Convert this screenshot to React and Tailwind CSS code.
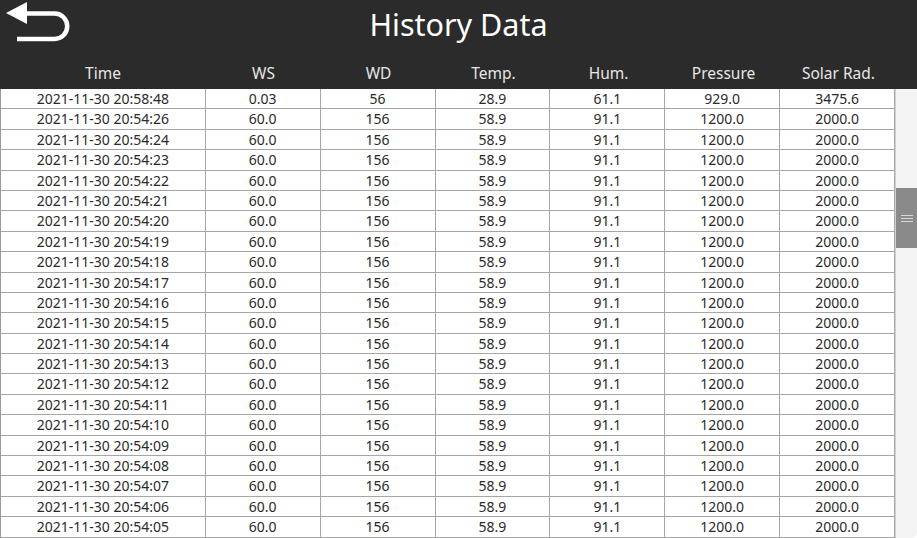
import React from 'react';

const columns = ['Time', 'WS', 'WD', 'Temp.', 'Hum.', 'Pressure', 'Solar Rad.'];

const rows = [
  ['2021-11-30 20:58:48', '0.03', '56', '28.9', '61.1', '929.0', '3475.6'],
  ...['26', '24', '23', '22', '21', '20', '19', '18', '17', '16', '15', '14', '13', '12', '11', '10', '09', '08', '07', '06', '05'].map(
    (s) => [`2021-11-30 20:54:${s}`, '60.0', '156', '58.9', '91.1', '1200.0', '2000.0']
  ),
];

function BackIcon() {
  return (
    <svg width="74" height="44" viewBox="0 0 74 44" fill="none">
      <polygon points="6,11 27,0 27,22" fill="#fff" />
      <path d="M24 11.5 H54.5 A12.75 12.75 0 0 1 54.5 37 H17" stroke="#fff" strokeWidth="4.5" fill="none" />
    </svg>
  );
}

export default function App() {
  return (
    <div className="w-[917px] h-[538px] overflow-hidden bg-white flex flex-col" style={{ fontFamily: '"Noto Sans", "Open Sans", sans-serif' }}>
      {/* top bar */}
      <div className="bg-[#2b2b2b] h-[89px] flex flex-col shrink-0">
        <div className="h-[52px] relative flex items-center justify-center">
          <div className="absolute left-0 top-[2px]">
            <BackIcon />
          </div>
          <h1 className="text-[30.5px] text-white leading-none mt-[-4px]">History Data</h1>
        </div>
        <div className="flex h-[37px] items-center text-[15.5px] text-[#e6e6e6] pt-[6px]">
          {columns.map((c, i) => (
            <div key={c} className={`${i === 0 ? 'w-[206px]' : 'w-[115px]'} text-center`}>
              {c}
            </div>
          ))}
        </div>
      </div>

      {/* body */}
      <div className="flex flex-1 min-h-0">
        <div className="w-[895px] border-l border-[#9a9a9a]">
          {rows.map((r, ri) => (
            <div key={ri} className="flex h-[20.4px] border-b border-[#a6a6a6] text-[14px] text-[#2a2a2a]">
              {r.map((v, ci) => (
                <div
                  key={ci}
                  className={`${ci === 0 ? 'w-[205px]' : 'w-[115px]'} border-r border-[#a6a6a6] text-center leading-[19.4px]`}
                >
                  {v}
                </div>
              ))}
            </div>
          ))}
        </div>
        <div className="w-[22px] bg-[#f4f4f4] border-l border-[#d0d0d0] rounded-br-[6px] relative">
          <div className="absolute left-0 right-0 top-[99px] h-[60px] bg-[#8a8a8a] flex flex-col items-center justify-center gap-[2px]">
            <div className="w-[12px] h-px bg-[#d8d8d8]" />
            <div className="w-[12px] h-px bg-[#d8d8d8]" />
            <div className="w-[12px] h-px bg-[#d8d8d8]" />
          </div>
        </div>
      </div>
    </div>
  );
}
